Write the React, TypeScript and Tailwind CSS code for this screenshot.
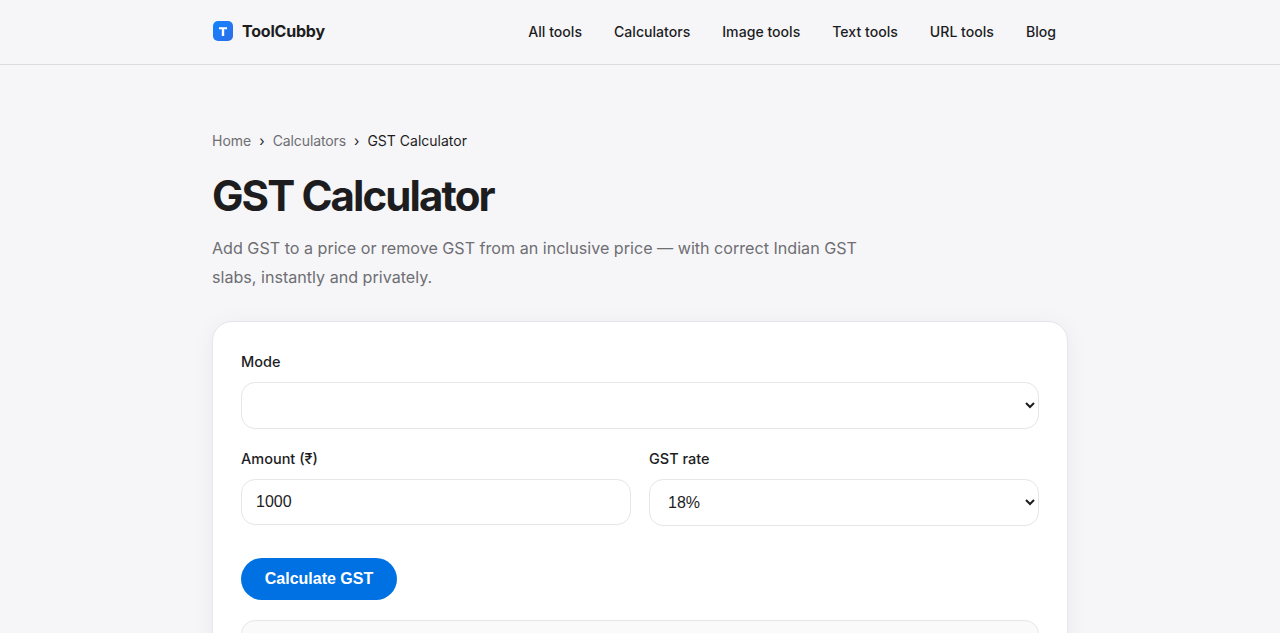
export default function App() {
  const nav = ["All tools", "Calculators", "Image tools", "Text tools", "URL tools", "Blog"];
  const field = "block w-full rounded-[14px] border border-[#e5e5ea] bg-white px-[14px] font-['Liberation_Sans',sans-serif] text-[16px] text-[#1d1d1f] outline-none";
  const label = "block mb-[10px] text-[14.5px] leading-[21px] font-[550] text-[#1d1d1f]";
  return (
    <div className="h-[633px] overflow-hidden bg-[#f6f6f8] font-['Inter','Liberation_Sans',sans-serif] text-[#1d1d1f]">
      <header className="h-[65px] border-b border-[#dcdcdf]">
        <div className="mx-auto flex h-[64px] w-[856px] items-center justify-between">
          <div className="ml-[1px] flex items-center gap-[9px]">
            <div className="flex h-5 w-5 -translate-y-[1px] items-center justify-center rounded-[5px] bg-gradient-to-br from-[#0a84ff] to-[#2b6de8]">
              <svg width="10" height="11" viewBox="0 0 10 11"><path d="M1 1.2H9V3.3H6.2V10H3.8V3.3H1Z" fill="#fff" /></svg>
            </div>
            <span className="pb-[2px] text-[16px] font-bold tracking-[-0.2px]">ToolCubby</span>
          </div>
          <nav className="flex gap-8 pr-[12px]">
            {nav.map((n) => (
              <a key={n} className="text-[14.1px] font-[450] text-[#1d1d1f]">{n}</a>
            ))}
          </nav>
        </div>
      </header>
      <main className="mx-auto w-[856px] pt-[65px]">
        <div className="flex items-center text-[14px] leading-[21px] text-[#6e6e73]">
          <span>Home</span>
          <span className="mx-2 text-[#1d1d1f]">›</span>
          <span className="tracking-[-0.1px]">Calculators</span>
          <span className="mx-2 text-[#1d1d1f]">›</span>
          <span className="text-[#1d1d1f]">GST Calculator</span>
        </div>
        <h1 className="mt-[20px] text-[42px] leading-[50px] font-bold tracking-[-1.9px] text-[#1d1d1f]">GST Calculator</h1>
        <p className="mt-[13px] w-[680px] text-[16.13px] leading-[29px] text-[#6e6e73]">
          Add GST to a price or remove GST from an inclusive price — with correct Indian GST slabs, instantly and privately.
        </p>
        <section className="mt-[29px] h-[500px] rounded-[20px] border border-[#e5e5ea] bg-white px-7 pt-[29px] shadow-[0_4px_24px_rgba(0,0,0,0.05)]">
          <label className={label}>Mode</label>
          <select className={`${field} h-[47px]`} defaultValue="">
            <option value=""></option>
          </select>
          <div className="mt-[19px] grid grid-cols-2 gap-[18px]">
            <div>
              <label className={label}>Amount (₹)</label>
              <input className={`${field} h-[46px]`} defaultValue="1000" />
            </div>
            <div>
              <label className={label}>GST rate</label>
              <select className={`${field} h-[47px]`} defaultValue="18%">
                <option>18%</option>
              </select>
            </div>
          </div>
          <button className="mt-[32px] h-[42px] w-[156px] rounded-full bg-[#0071e3] font-['Liberation_Sans',sans-serif] text-[16px] font-bold text-white">
            Calculate GST
          </button>
          <div className="mt-5 h-[120px] rounded-[14px] border border-[#e5e5ea] bg-[#fafafa]"></div>
        </section>
      </main>
    </div>
  );
}
